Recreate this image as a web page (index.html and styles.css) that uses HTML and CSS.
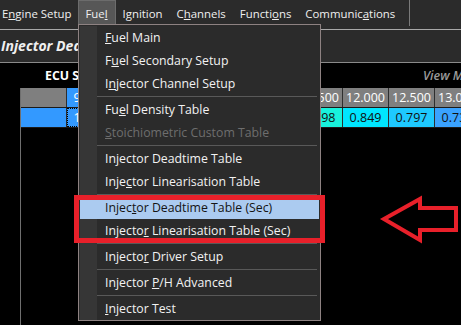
FILE: index.html
```html
<!DOCTYPE html>
<html>
<head>
<meta charset="utf-8">
<link rel="stylesheet" href="styles.css">
</head>
<body>
<div class="app">
  <div class="menubar">
    <span class="mb first">E<u>n</u>gine Setup</span>
    <span class="mb open">Fue<u>l</u></span>
    <span class="mb">I<u>g</u>nition</span>
    <span class="mb">C<u>h</u>annels</span>
    <span class="mb">Functi<u>o</u>ns</span>
    <span class="mb">Communic<u>a</u>tions</span>
    <span class="mb-sep"></span>
  </div>
  <div class="titlebar">Injector Deadtime Table</div>
  <div class="content">
    <div class="subhead">
      <span class="ecu">ECU Sensors</span>
      <span class="view">View Mode</span>
    </div>
    <div class="grid">
      <div class="row">
        <div class="cell lbl hdr"></div>
        <div class="cell hdr sel">9.000</div>
        <div class="cell hdr">9.500</div>
        <div class="cell hdr">10.000</div>
        <div class="cell hdr">10.500</div>
        <div class="cell hdr">11.000</div>
        <div class="cell hdr">11.500</div>
        <div class="cell hdr">12.000</div>
        <div class="cell hdr">12.500</div>
        <div class="cell hdr">13.000</div>
      </div>
      <div class="row">
        <div class="cell lbl blue"></div>
        <div class="cell blue focus">1.210</div>
        <div class="cell v1">1.130</div>
        <div class="cell v2">1.060</div>
        <div class="cell v3">1.000</div>
        <div class="cell v4">0.948</div>
        <div class="cell v5">0.898</div>
        <div class="cell v6">0.849</div>
        <div class="cell v7">0.797</div>
        <div class="cell v8">0.735</div>
      </div>
    </div>
  </div>

  <div class="menu">
    <div class="item"><u>F</u>uel Main</div>
    <div class="item">F<u>u</u>el Secondary Setup</div>
    <div class="item">I<u>n</u>jector Channel Setup</div>
    <div class="sep"></div>
    <div class="item">Fu<u>e</u>l Density Table</div>
    <div class="item disabled"><u>S</u>toichiometric Custom Table</div>
    <div class="sep"></div>
    <div class="item">In<u>j</u>ector Deadtime Table</div>
    <div class="item">Inje<u>c</u>tor Linearisation Table</div>
    <div class="sep"></div>
    <div class="item hl">Injec<u>t</u>or Deadtime Table (Sec)</div>
    <div class="item">Injecto<u>r</u> Linearisation Table (Sec)</div>
    <div class="sep"></div>
    <div class="item">Injecto<u>r</u> Driver Setup</div>
    <div class="sep"></div>
    <div class="item">Injector <u>P</u>/H Advanced</div>
    <div class="sep"></div>
    <div class="item"><u>I</u>njector Test</div>
  </div>

  <svg class="annot" width="461" height="325" viewBox="0 0 461 325">
    <rect x="76.5" y="197.5" width="246" height="43" fill="none" stroke="#e8202a" stroke-width="5"/>
    <polygon points="384,219 420,199 420,208 456,208 456,230 420,230 420,240" fill="none" stroke="#e8202a" stroke-width="4" stroke-linejoin="miter"/>
  </svg>
</div>
</body>
</html>
```

FILE: styles.css
```css
html, body {
  margin: 0;
  padding: 0;
}
body {
  width: 461px;
  height: 325px;
  overflow: hidden;
  background: #2b2b2b;
  color: #f0f0f0;
  font-family: "Open Sans", "Noto Sans", sans-serif;
  font-size: 12.3px;
}
.app {
  position: relative;
  width: 461px;
  height: 325px;
  display: flex;
  flex-direction: column;
  overflow: hidden;
}
u {
  text-decoration: underline;
  text-underline-offset: 1px;
}

/* menubar */
.menubar {
  height: 29px;
  display: flex;
  align-items: flex-start;
  border-bottom: 1px solid #a8a8a8;
  background: #2b2b2b;
  flex: none;
  white-space: nowrap;
  font-size: 11.4px;
}
.mb {
  height: 24px;
  line-height: 24px;
  padding: 2px 7px 0;
  box-sizing: border-box;
}
.mb.first {
  padding-left: 2px;
}
.mb.open {
  background: #575757;
  border: 1px solid #6c6c6c;
  border-bottom: none;
  padding: 1px 7px 0 6px;
}
.mb-sep {
  margin-left: 7px;
  width: 1px;
  height: 26px;
  background: #7a7a7a;
}

/* title */
.titlebar {
  height: 32px;
  line-height: 32px;
  border-bottom: 1px solid #8a8a8a;
  font-weight: 700;
  font-style: italic;
  font-size: 14px;
  padding-left: 1px;
  flex: none;
  white-space: nowrap;
}

/* content */
.content {
  flex: 1;
  background: #000;
  display: flex;
  flex-direction: column;
}
.subhead {
  height: 25px;
  display: flex;
  align-items: center;
  padding-left: 45px;
  white-space: nowrap;
}
.ecu {
  width: 378px;
  flex: none;
  font-weight: 700;
  font-size: 12.3px;
  color: #fff;
}
.view {
  flex: none;
  font-style: italic;
  font-weight: 600;
  font-size: 12.5px;
  color: #9a9a9a;
}
.grid {
  flex: 1;
  margin-left: 20px;
  border-left: 1px solid #6f6f6f;
}
.row {
  display: flex;
  height: 19px;
  border-bottom: 1px solid #1a1a1a;
}
.cell {
  flex: none;
  width: 45px;
  border-right: 1px solid #2e2e2e;
  text-align: center;
  line-height: 19px;
  font-size: 12.5px;
  color: #111;
  white-space: nowrap;
  overflow: hidden;
  box-sizing: content-box;
}
.hdr {
  background: #7f7f7f;
  color: #fff;
}
.sel, .blue {
  background: #3399ff;
  color: #fff;
}
.focus {
  outline: 1px dotted #000;
  outline-offset: -1px;
}
.v1 { background: #3a8cff; }
.v2 { background: #3a9cff; }
.v3 { background: #2ab4ff; }
.v4 { background: #14d8ff; }
.v5 { background: #18f2dc; }
.v6 { background: #00e6ff; }
.v7 { background: #1ec9ff; }
.v8 { background: #3aa2ff; }

/* dropdown menu */
.menu {
  position: absolute;
  left: 78px;
  top: 24px;
  width: 239px;
  padding: 1px 1px 0;
  border: 1px solid #8e8282;
  background: #2b2b2b linear-gradient(to right, #363636 0, #363636 17px, transparent 17px);
  background-origin: content-box;
  background-repeat: no-repeat;
  display: flex;
  flex-direction: column;
}
.item {
  height: 23px;
  line-height: 23px;
  padding-left: 25px;
  white-space: nowrap;
  color: #f2f2f2;
}
.item.disabled {
  color: #6e6e6e;
}
.item.hl {
  background: #abcbf0;
  color: #141414;
}
.sep {
  height: 3px;
  display: flex;
  align-items: center;
  padding-left: 17px;
  padding-right: 2px;
}
.sep::before {
  content: "";
  flex: 1;
  height: 1px;
  background: #595959;
}

.annot {
  position: absolute;
  left: 0;
  top: 0;
  pointer-events: none;
}
```
